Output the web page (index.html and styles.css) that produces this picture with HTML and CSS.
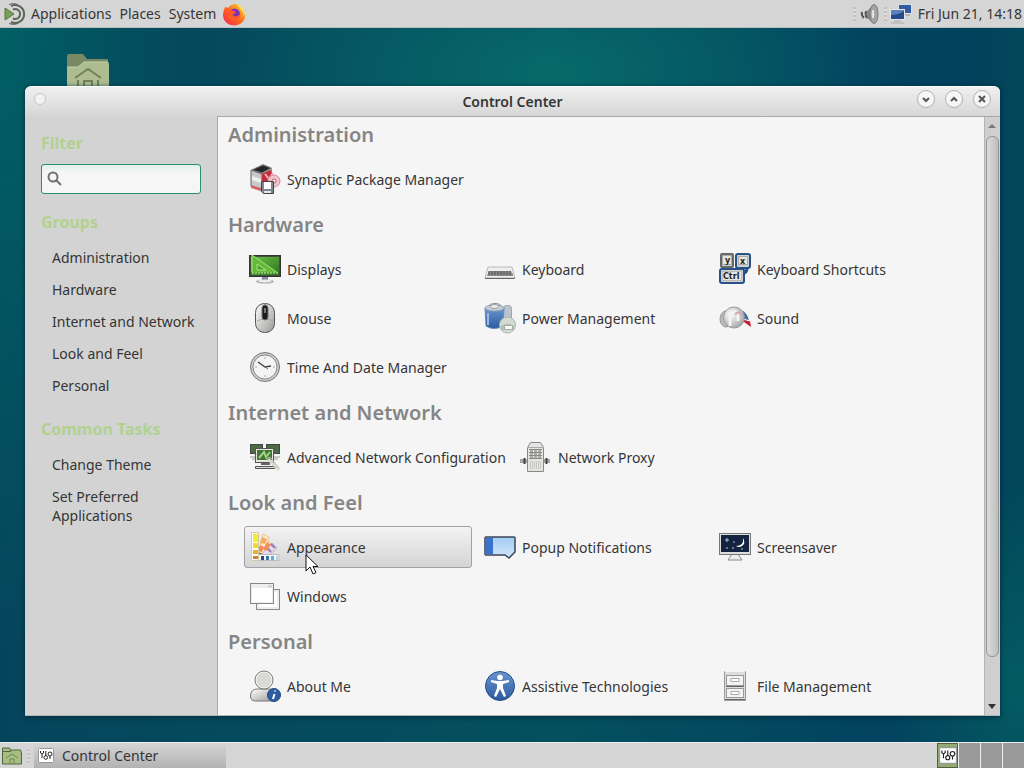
FILE: index.html
```html
<!DOCTYPE html>
<html lang="en">
<head>
<meta charset="utf-8">
<title>Control Center</title>
<link rel="stylesheet" href="styles.css">
</head>
<body>
<svg class="defs" width="0" height="0" aria-hidden="true">
  <defs>
    <linearGradient id="metal" x1="0" y1="0" x2="1" y2="1"><stop offset="0" stop-color="#fff"/><stop offset="1" stop-color="#9a9a96"/></linearGradient>
    <linearGradient id="blue" x1="0" y1="0" x2="0" y2="1"><stop offset="0" stop-color="#6a95cf"/><stop offset="1" stop-color="#2c5a9e"/></linearGradient>
    <linearGradient id="green" x1="0" y1="0" x2="1" y2="1"><stop offset="0" stop-color="#6cc045"/><stop offset="1" stop-color="#2e7420"/></linearGradient>
    <linearGradient id="sky" x1="0" y1="0" x2="0" y2="1"><stop offset="0" stop-color="#a3cdf3"/><stop offset="1" stop-color="#cfe5fa"/></linearGradient>
    <linearGradient id="fire" x1="0" y1="1" x2="1" y2="0"><stop offset="0" stop-color="#f5204f"/><stop offset=".5" stop-color="#ff6a1f"/><stop offset="1" stop-color="#ffd738"/></linearGradient>
    <radialGradient id="ball" cx=".35" cy=".35" r=".8"><stop offset="0" stop-color="#fff"/><stop offset="1" stop-color="#999"/></radialGradient>
  </defs>
</svg>

<header class="panel panel-top">
  <nav class="menus">
    <button class="menu" type="button">
      <svg width="22" height="22" viewBox="0 0 22 22" aria-hidden="true"><path d="M1 5v12l9-6z" fill="#78a05a" stroke="#56763d"/><g fill="none" stroke="#5a6656" stroke-width="2"><path d="M7 3A9 9 0 1 1 7 19"/><path d="M9 6.500a5 5 0 1 1 0 9"/></g><path d="M5 1.500a10.500 10.500 0 0 1 9 0M5 20.500a10.500 10.500 0 0 0 9 0" fill="none" stroke="#5a6656"/></svg>
      Applications</button>
    <button class="menu" type="button">Places</button>
    <button class="menu" type="button">System</button>
    <button class="menu" type="button" aria-label="Firefox">
      <svg width="24" height="24" viewBox="0 0 24 24" aria-hidden="true"><path d="M3 5c1 0 2 .5 3 1 2-3 5-4 8-4 2 1 3 2 4 3 3 2 5 5 5 9 0 6-5 9-10.500 9.500C6 23.500 1 19 1 13c0-3 1-5 2-8z" fill="url(#fire)"/><circle cx="12.500" cy="12" r="5.500" fill="#7b35b8"/><path d="M6 8c2-1 4 0 5 1 3 0 3 2 1 3-2 0-2 1 0 2 2 1 5 0 6-2 1 5-4 7-7 6-5 0-7-6-5-10z" fill="#ff5a2c"/><path d="M14 2c2 1 3 3 4 5 3 2 4 5 3 8 3-5 1-8-2-10-1-2-3-3-5-3z" fill="#ffe04a"/></svg>
    </button>
  </nav>
  <div class="tray">
    <span class="grip"></span>
    <svg width="22" height="22" viewBox="0 0 22 22" role="img" aria-label="Volume"><path d="M8 8l6-6c4 4 4 14 0 18l-6-5z" fill="#888"/><ellipse cx="15" cy="11" rx="4" ry="9.500" fill="#a5a5a5" stroke="#777"/><ellipse cx="14" cy="11" rx="2" ry="5" fill="#e2e2e2" stroke="#999"/><path d="M3 9q-1 3 2 6M7 8q-1 4 1 7" fill="none" stroke="#555" stroke-width="2"/></svg>
    <span class="grip"></span>
    <svg width="22" height="22" viewBox="0 0 22 22" role="img" aria-label="Network"><rect x="8.500" y="1.500" width="13" height="9" fill="#345b9f" stroke="#d9dee5"/><path d="M15 12h5" stroke="#999"/><rect x=".5" y="6.500" width="14" height="10" fill="#5c80bd" stroke="#e4e6ea"/><path d="M1 12c5 0 8-1 13-4v8H1z" fill="#244a8c"/><path d="M4 18h7M1 20h13" stroke="#aaa" stroke-width="1"/></svg>
    <time class="clock">Fri Jun 21, 14:18</time>
  </div>
</header>

<main class="desktop">
  <svg class="home" width="44" height="44" viewBox="0 0 44 44" role="img" aria-label="Home folder"><path d="M1 3q0-2 2-2h14l4 5h21v30H1z" fill="#788963"/><path d="M1 14h11l6-5h23q2 0 2 2v32H1z" fill="#adbd8f"/><path d="M1 14h11l6-5h24" fill="none" stroke="#c5d2ad"/><path d="M9 25l13-9 13 9M12 40V27M32 40V27M18 40V28h8v12" fill="none" stroke="#71805b" stroke-width="2"/></svg>

  <section class="window" aria-label="Control Center">
    <header class="titlebar">
      <button class="dot" type="button" aria-label="Window menu"></button>
      <h1 class="title">Control Center</h1>
      <div class="controls">
        <button class="ctl" type="button" aria-label="Minimize"><svg width="10" height="10" viewBox="0 0 10 10"><path d="M2 4l3 3 3-3"/></svg></button>
        <button class="ctl" type="button" aria-label="Maximize"><svg width="10" height="10" viewBox="0 0 10 10"><path d="M2 7l3-3 3 3"/></svg></button>
        <button class="ctl" type="button" aria-label="Close"><svg width="10" height="10" viewBox="0 0 10 10"><path d="M2 2l6 6M8 2L2 8"/></svg></button>
      </div>
    </header>
    <div class="body">
      <aside class="sidebar">
        <label class="side-title" for="filter">Filter</label>
        <div class="search">
          <svg width="16" height="16" viewBox="0 0 16 16" aria-hidden="true"><circle cx="6" cy="6" r="4.500"/><path d="M9.500 9.500L14 14"/></svg>
          <input id="filter" type="text">
        </div>
        <h2 class="side-title">Groups</h2>
        <ul class="links">
          <li><a href="#administration">Administration</a></li>
          <li><a href="#hardware">Hardware</a></li>
          <li><a href="#internet">Internet and Network</a></li>
          <li><a href="#look">Look and Feel</a></li>
          <li><a href="#personal">Personal</a></li>
        </ul>
        <h2 class="side-title">Common Tasks</h2>
        <ul class="links">
          <li><a href="#theme">Change Theme</a></li>
          <li><a href="#preferred">Set Preferred Applications</a></li>
        </ul>
      </aside>

      <div class="content">
        <div class="groups">
          <section class="group" id="administration">
            <h2>Administration</h2>
            <div class="items">
              <button class="item" type="button"><svg width="32" height="32" viewBox="0 0 32 32"><path d="M2 7l12-6 9 4v20l-10 3-11-5z" fill="#999"/><path d="M2 7l11 4v17L2 23z" fill="#c8c8c8" stroke="#666"/><path d="M3 7l11-5 8 3-9 5z" fill="#252525" stroke="#777"/><path d="M3 13l9 3v4l-9-3z" fill="#eee"/><path d="M13 11l9-4 2 10-11 4z" fill="#c42e3a"/><path d="M16 11l4 5 4-6" fill="none" stroke="#f6b0b5" stroke-width="2"/><circle cx="25" cy="18" r="6" fill="#efc5ca" stroke="#d58c95"/><circle cx="25" cy="18" r="2" fill="#fff" stroke="#c55763"/><path d="M2 22l10 3v3L2 25z" fill="#d3656d"/><path d="M12.500 18.500h12v12h-10l-2-2z" fill="#7d8790" stroke="#444"/><path d="M15 19h7v7h-7z" fill="#fff"/><path d="M15 28h7v2h-7z" fill="#dfe5ea"/></svg>Synaptic Package Manager</button>
            </div>
          </section>
          <section class="group" id="hardware">
            <h2>Hardware</h2>
            <div class="items">
              <button class="item" type="button"><svg width="32" height="32" viewBox="0 0 32 32"><ellipse cx="16" cy="28.500" rx="9" ry="2" fill="#aaa"/><path d="M13 24h6v4h-6z" fill="#888ca0"/><ellipse cx="16" cy="28" rx="7" ry="1.500" fill="#eee"/><rect x=".5" y="2.500" width="31" height="21" fill="#424f3c" stroke="#333"/><rect x="2" y="4" width="28" height="18" fill="url(#green)"/><path d="M3 2v18h26zM8 11v6h9z" fill="#64b939" fill-rule="evenodd" stroke="#a8e782"/><path d="M2 20h28" stroke="#1c5014" stroke-dasharray="1 2"/></svg>Displays</button>
              <button class="item" type="button"><svg width="32" height="32" viewBox="0 0 32 32"><path d="M4 14h24l3 11H1z" fill="#eee" stroke="#bbb"/><path d="M5 18h22l2 5H3z" fill="#888"/><path d="M4 19h24M4 21h25" stroke="#555" stroke-dasharray="2 1"/><path d="M1 25.500h30" stroke="#666"/></svg>Keyboard</button>
              <button class="item" type="button"><svg width="32" height="32" viewBox="0 0 32 32"><g stroke-width="2"><path d="M28 15q0 5-5 6" fill="none" stroke="#27518a" stroke-width="3"/><rect x="2" y="1" width="12" height="13" rx="1" fill="#d2d2ca" stroke="#65686c"/><rect x="17" y="1" width="14" height="14" rx="2" fill="#d2d2ca" stroke="#27518a"/><rect x="1" y="16" width="24" height="14" rx="2" fill="#d2d2ca" stroke="#27518a"/></g><rect x="3.500" y="2.500" width="9" height="9" fill="#e6e6df" stroke="#aaa"/><rect x="19.500" y="3.500" width="9" height="8" fill="#e6e6df" stroke="#aaa"/><rect x="3.500" y="18.500" width="19" height="9" fill="#e6e6df" stroke="#bbb"/><g class="keycap"><text x="6" y="10">y</text><text x="21" y="11">x</text><text x="4" y="26">Ctrl</text></g></svg>Keyboard Shortcuts</button>
              <button class="item" type="button"><svg width="32" height="32" viewBox="0 0 32 32"><rect x="6.500" y="1.500" width="19" height="29" rx="9" fill="url(#metal)" stroke="#555"/><path d="M8 19q8-4 16 0" fill="none" stroke="#aaa"/><path d="M16 2v16" stroke="#555"/><rect x="13" y="3" width="6" height="15" rx="3" fill="#1d1d1d" stroke="#777"/><path d="M16 6v5" stroke="#777" stroke-width="2"/></svg>Mouse</button>
              <button class="item" type="button"><svg width="32" height="32" viewBox="0 0 32 32"><ellipse cx="11" cy="4" rx="6" ry="2.500" fill="#eee" stroke="#858e98"/><rect x="19.500" y="3.500" width="8" height="18" rx="3" fill="#bac4cd" stroke="#9ca7af"/><path d="M1 6l1 18q8 5 17 0l1-18z" fill="url(#blue)" stroke="#6789b0"/><ellipse cx="10.500" cy="6" rx="9.500" ry="3" fill="#c2cfd9" stroke="#8fa3b3"/><ellipse cx="10.500" cy="4.500" rx="4" ry="2" fill="#eee" stroke="#999"/><path d="M4 11v12" stroke="#9bbbe1" stroke-width="2"/><circle cx="23.500" cy="23" r="8" fill="#d3dcd4" stroke="#a9b6ac"/><path d="M17 24q6-5 13 0v4H17z" fill="#b3c1b0"/><rect x="20.500" y="23.500" width="8" height="4" fill="#f7f7f7" stroke="#a4b0a5"/></svg>Power Management</button>
              <button class="item" type="button"><svg width="32" height="32" viewBox="0 0 32 32"><path d="M22 8q7 3 8 11l-6-2z" fill="#3970ad"/><path d="M24 17l7 2 1 6-7-5z" fill="#c91f38"/><path d="M24 17l7 2" stroke="#fff"/><ellipse cx="7" cy="17" rx="6" ry="8" fill="#bbb" stroke="#999"/><circle cx="15" cy="15.500" r="10.500" fill="url(#ball)" stroke="#999"/><path d="M11 24V13q4-5 8-2v8" fill="none" stroke="#f3f3f3" stroke-width="3"/><path d="M16 12l4-2 3 4" fill="none" stroke="#d6a7ae" stroke-width="2"/></svg>Sound</button>
              <button class="item" type="button"><svg width="32" height="32" viewBox="0 0 32 32"><circle cx="16" cy="16" r="14.500" fill="#ccc" stroke="#777"/><circle cx="16" cy="16" r="12" fill="#f4f4f4" stroke="#888"/><path d="M16 6v2M16 24v2M6 16h2M24 16h2" stroke="#aaa"/><path d="M9 11l7 5 6-1" fill="none" stroke="#444" stroke-width="1.500"/><path d="M15 15l4 3" stroke="#666"/></svg>Time And Date Manager</button>
            </div>
          </section>
          <section class="group wide" id="internet">
            <h2>Internet and Network</h2>
            <div class="items">
              <button class="item" type="button"><svg width="32" height="32" viewBox="0 0 32 32"><g fill="#4e6a45" stroke="#444"><rect x="1.500" y="3.500" width="12" height="9"/><rect x="17.500" y="3.500" width="13" height="9"/></g><path d="M1 16h7M24 16h7M3 18h5M24 18h5" stroke="#999" stroke-width="1"/><rect x="6.500" y="7.500" width="18" height="14" fill="#e6e6df" stroke="#555"/><rect x="8" y="9" width="15" height="10" fill="#3f7634"/><path d="M10 17l5-6 2 5 4-5" fill="none" stroke="#a1d387" stroke-width="2"/><path d="M12 23h9" stroke="#666" stroke-width="2"/><path d="M6.500 25.500h19v2h-19z" fill="#ddd" stroke="#555"/><path d="M19 18l11 11" stroke="#ded8ca" stroke-width="3"/><path d="M17 18l4-2 9 11" fill="none" stroke="#bbb"/></svg>Advanced Network Configuration</button>
              <button class="item" type="button"><svg width="32" height="32" viewBox="0 0 32 32"><path d="M0 19h8M0 21h8M24 19h6M24 21h6" stroke="#555"/><path d="M4.500 17v6M26.500 17v6" stroke="#444" stroke-width="2"/><path d="M7.500 6.500l3-5h10l3 5v24h-16z" fill="#e4e4e0" stroke="#888"/><path d="M7 6.500h17" stroke="#aaa"/><path d="M9 8.500h13M9 11.500h13M9 14.500h13M9 17.500h13" stroke="#888"/><path d="M10 10h11M10 13h11M10 16h11" stroke="#777" stroke-dasharray="3 1"/><path d="M10 21h12M10 23h12M10 25h12M10 27h12" stroke="#aaa" stroke-dasharray="1 1"/></svg>Network Proxy</button>
            </div>
          </section>
          <section class="group" id="look">
            <h2>Look and Feel</h2>
            <div class="items">
              <button class="item hovered" type="button"><svg width="32" height="32" viewBox="0 0 32 32"><path d="M8 28L23 12l5 5-14 13z" fill="#e3dceb" stroke="#c0b4c8"/><path d="M18 17l4 4M22 13l4 4" stroke="#9a7aae" stroke-width="2"/><path d="M8 28L14 3l6 3-1 5 3 1z" fill="#ffe8d2" stroke="#ecc4a0"/><path d="M13 6l5 2-2 5-5-1z" fill="#f3ac60"/><path d="M18 11l4 3-5 6-3-2z" fill="#f2905c"/><path d="M11 14l4 2-2 5-4-1z" fill="#ef8d5b"/><path d="M9 21l5 2-5 5z" fill="#a04466"/><path d="M10 23.500h20v6H6z" fill="#f5f5f5" stroke="#bbb"/><path d="M12 25h3v4h-3z" fill="#244a75"/><path d="M17 25h3v4h-3z" fill="#3478ad"/><path d="M22 25h3v4h-3z" fill="#67abd0"/><path d="M27 25h2v4h-2z" fill="#a9d3e4"/><path d="M2.500 1.500h7v28h-7z" fill="#fff" stroke="#d5cba0"/><path d="M4 3h5v8H4z" fill="#f4eb35"/><path d="M4 12h5v5H4z" fill="#f0d83a"/><path d="M4 19h5v4H4z" fill="#e8b034"/><path d="M4 25h5v3H4z" fill="#cf8034"/></svg>Appearance</button>
              <button class="item" type="button"><svg width="32" height="32" viewBox="0 0 32 32"><path d="M2 6h28q1 0 1 1v14l-3 3-3 3-4-3H2q-1 0-1-1V7q0-1 1-1z" fill="url(#sky)" stroke="#3a4654" stroke-width="1.500"/><path d="M2 7h7v16H2z" fill="#3b72cc"/></svg>Popup Notifications</button>
              <button class="item" type="button"><svg width="32" height="32" viewBox="0 0 32 32"><path d="M13 23h6l4 6H9z" fill="#eee" stroke="#888"/><rect x=".5" y="2.500" width="31" height="21" fill="#ddd" stroke="#777"/><rect x="2" y="4" width="28" height="17" fill="#14233f"/><path d="M24 7q3 5-1 8-3 2-6 0 8 0 7-8z" fill="#fff"/><path d="M6 9h4M8 7v4M14 11h2M7 17h2M13 17h2M22 18h2" stroke="#a9c3e4"/></svg>Screensaver</button>
              <button class="item" type="button"><svg width="32" height="32" viewBox="0 0 32 32"><rect x="7.500" y="9.500" width="23" height="20" fill="#eee" stroke="#888"/><rect x="10" y="12" width="18" height="15" fill="#fff"/><rect x="1.500" y="3.500" width="23" height="20" fill="#eee" stroke="#888"/><rect x="3" y="8" width="20" height="14" fill="#fff"/><path d="M19 5.500h4v2h-4z" fill="#ccc"/></svg>Windows</button>
            </div>
          </section>
          <section class="group" id="personal">
            <h2>Personal</h2>
            <div class="items">
              <button class="item" type="button"><svg width="32" height="32" viewBox="0 0 32 32"><path d="M1.500 26q0-7 7-7h12q6 0 6 7 0 5-5 5h-15q-5 0-5-5z" fill="url(#metal)" stroke="#777"/><circle cx="15" cy="10" r="9" fill="#f5f5f3" stroke="#777"/><circle cx="15" cy="10" r="7.500" fill="#d9d9d5"/><circle cx="25" cy="25" r="6.500" fill="#2c5e9f" stroke="#1e4a83"/><path d="M25.500 24l-1.500 5M26 20.500v1" stroke="#fff" stroke-width="2"/></svg>About Me</button>
              <button class="item" type="button"><svg width="32" height="32" viewBox="0 0 32 32"><circle cx="16" cy="16" r="14.500" fill="url(#blue)" stroke="#234f8c"/><circle cx="16" cy="7.500" r="2.800" fill="#fff"/><path d="M7 10l6 1h6l6-1v2l-6 2v4l3 8-2 1-4-8-4 8-2-1 3-8v-4l-6-2z" fill="#fff"/></svg>Assistive Technologies</button>
              <button class="item" type="button"><svg width="32" height="32" viewBox="0 0 32 32"><path d="M5.500 1.500h21v29h-21z" fill="#ddd" stroke="#999"/><path d="M6 1.500h20" stroke="#f5f5f5"/><rect x="7.500" y="5.500" width="17" height="10" fill="#f3f3f3" stroke="#999"/><rect x="7.500" y="18.500" width="17" height="9" fill="#f3f3f3" stroke="#999"/><path d="M12 8.500h8v3h-8zM12 21.500h8v3h-8z" fill="#fff" stroke="#aaa"/><path d="M7 16.500h18M6 29.500h20" stroke="#666"/></svg>File Management</button>
            </div>
          </section>
        </div>
        <div class="scrollbar" aria-hidden="true">
          <span class="arrow up"></span>
          <span class="thumb"></span>
          <span class="arrow down"></span>
        </div>
      </div>
    </div>
  </section>

  <svg class="pointer" width="14" height="22" viewBox="0 0 14 22" aria-hidden="true"><path d="M1 1v16l4-4 3 7 3-1.500-3-6h5z" fill="#fff" stroke="#111"/></svg>
</main>

<footer class="panel panel-bottom">
  <button class="show" type="button" aria-label="Show desktop"><svg width="22" height="20" viewBox="0 0 22 20"><path d="M1.500 5v-3h7l1 2h10l1 3v11h-19z" fill="#a8bd82" stroke="#4f663c"/><path d="M2 5.500h7l2-1" fill="none" stroke="#4f663c"/><path d="M5 12l6-4 6 4M9 17v-4h4v4" fill="none" stroke="#6e8852"/></svg></button>
  <span class="grip"></span>
  <button class="task" type="button"><svg width="16" height="16" viewBox="0 0 16 16" aria-hidden="true"><use href="#cc"/></svg>Control Center</button>
  <div class="workspaces">
    <button class="ws active" type="button" aria-label="Workspace 1"><svg width="18" height="18" viewBox="0 0 16 16"><g id="cc"><rect x=".5" y=".5" width="15" height="14" rx="1" fill="#fff" stroke="#999"/><g fill="none" stroke="#222"><path d="M2.500 3v2q1.500 2 3 0V3M4 6v4"/><circle cx="7.800" cy="9.500" r="1.800"/><path d="M7.800 3v5M12 8v3"/><circle cx="12" cy="6" r="2"/></g></g></svg></button>
    <button class="ws" type="button" aria-label="Workspace 2"></button>
    <button class="ws" type="button" aria-label="Workspace 3"></button>
    <button class="ws" type="button" aria-label="Workspace 4"></button>
  </div>
</footer>
</body>
</html>
```
FILE: styles.css
```css
* { box-sizing: border-box; }

body {
  margin: 0;
  height: 100vh;
  display: flex;
  flex-direction: column;
  overflow: hidden;
  font: 14px/19px "Noto Sans", "Open Sans", sans-serif;
  color: #353535;
}

button {
  font: inherit;
  color: inherit;
  background: none;
  border: 0;
  padding: 0;
}

h1, h2, ul { margin: 0; padding: 0; font-size: inherit; list-style: none; }
svg { flex: none; display: block; }
.defs { position: absolute; }

.panel { flex: none; display: flex; align-items: center; background: #d5d5d5; }
.panel-top { height: 28px; justify-content: space-between; padding: 0 4px; border-bottom: 1px solid #b9c1c2; }
.menus { display: flex; align-items: center; gap: 8px; }
.menu { display: flex; align-items: center; gap: 5px; }
.menu:last-child { margin-left: -2px; }
.tray { display: flex; align-items: center; gap: 3px; margin-right: -2px; }
.clock { margin-left: 3px; white-space: nowrap; }
.grip { flex: none; width: 3px; height: 14px; background: repeating-linear-gradient(#c2c2c2 0 2px, #ddd 2px 4px); }

.desktop {
  flex: 1;
  position: relative;
  min-height: 0;
  background:
    radial-gradient(ellipse 330px 150px at 54% 6%, #07696a, transparent),
    radial-gradient(ellipse 140px 200px at 100% 92%, #045b62, transparent),
    linear-gradient(90deg, #00586000 96%, #00586055) no-repeat,
    radial-gradient(ellipse 180px 620px at 0 0, #006064, transparent),
    linear-gradient(90deg, #05455c, #04505e 55%, #024360 85%, #024159);
}
.home { position: absolute; left: 66px; top: 25px; }
.pointer { position: absolute; left: 305px; top: 526px; }

.window {
  position: absolute;
  inset: 58px 24px 26px 25px;
  display: flex;
  flex-direction: column;
  background: #d3d3d3;
  border-top: 1px solid #fff;
  border-bottom: 1px solid #aeb6b8;
  border-radius: 6px 6px 0 0;
  box-shadow: 0 1px 5px #00283c;
  overflow: hidden;
}
.titlebar {
  flex: none;
  height: 29px;
  display: grid;
  grid-template-columns: 1fr auto 1fr;
  align-items: center;
  padding: 0 9px;
  background: linear-gradient(#f0f0f0, #d6d6d6);
}
.dot { width: 12px; height: 12px; border-radius: 50%; background: #f3f3f3; border: 1px solid #c6c6c6; align-self: start; margin-top: 6px; }
.title { font-weight: 600; font-size: 14px; }
.controls { display: flex; gap: 10px; justify-self: end; align-self: start; margin-top: 3px; }
.ctl {
  width: 18px;
  height: 18px;
  display: grid;
  place-items: center;
  border: 1px solid #b0b0b0;
  border-radius: 50%;
  background: #f6f6f6;
}
.ctl svg { fill: none; stroke: #555; stroke-width: 2; }

.body { flex: 1; display: flex; min-height: 0; }
.sidebar { flex: none; width: 192px; padding: 17px 16px 0; }
.side-title { display: block; font-weight: 700; font-size: 16px; line-height: 20px; color: #b1d18f; }
.search {
  display: flex;
  align-items: center;
  gap: 4px;
  height: 30px;
  margin: 11px 0 18px;
  padding: 0 5px;
  background: linear-gradient(#e2f0ea, #f6f6f6 30%);
  border: 1px solid #2b8e72;
  border-radius: 3px;
}
.search svg { fill: none; stroke: #707070; stroke-width: 2; }
.search input { flex: 1; min-width: 0; border: 0; outline: 0; background: none; font: inherit; }
.links { display: flex; flex-direction: column; gap: 13px; padding: 16px 0 24px 11px; margin-right: -16px; }
.links a { color: inherit; text-decoration: none; display: block; }
.links li { max-width: 148px; }

.content { flex: 1; min-width: 0; display: flex; background: #f5f5f5; border: 1px solid #a8a8a8; border-right-color: #cfcfcf; border-bottom: 0; }
.groups { flex: 1; min-width: 0; overflow: hidden; padding: 3px 10px 0; }
.group h2 { font-weight: 600; font-size: 20px; line-height: 30px; color: #858585; }
.items {
  display: grid;
  grid-template-columns: repeat(auto-fill, 228px);
  gap: 7px;
  padding: 8px 0 10px 16px;
}
.wide .items { grid-template-columns: repeat(auto-fill, 264px); }
.item {
  height: 42px;
  display: flex;
  align-items: center;
  gap: 6px;
  padding: 0 4px;
  border: 1px solid transparent;
  border-radius: 3px;
  white-space: nowrap;
}
.hovered { background: linear-gradient(#f3f3f3, #d4d4d4); border-color: #a2a2a2; }
.keycap text { font: 700 8px "DejaVu Sans", sans-serif; fill: #222; }

.scrollbar {
  flex: none;
  width: 15px;
  display: flex;
  flex-direction: column;
  align-items: center;
  padding: 7px 0 6px;
  background: #cfcfcf;
  border-left: 1px solid #b5b5b5;
}
.arrow { border: 4px solid transparent; border-top: 0; border-bottom: 4px solid #777; }
.arrow.down { border-top: 5px solid #333; border-bottom: 0; }
.thumb { width: 13px; flex: 1; margin: 8px 0 47px; border: 1px solid #959595; border-radius: 6px; background: linear-gradient(90deg, #ddd, #bdbdbd); }

.panel-bottom { height: 26px; border-top: 1px solid #eee; gap: 4px; align-items: stretch; padding-left: 1px; }
.panel-bottom .grip { align-self: center; }
.show { display: grid; place-items: center; }
.task {
  width: 192px;
  display: flex;
  align-items: center;
  gap: 8px;
  padding-left: 4px;
  background: linear-gradient(#d5d5d5, #b2b2b2);
}
.workspaces { margin-left: auto; display: flex; gap: 1px; background: #eee; }
.ws { width: 21px; background: #999; display: grid; place-items: center; }
.ws.active { background: #91aa71; border: 1px solid #53613f; }
```
